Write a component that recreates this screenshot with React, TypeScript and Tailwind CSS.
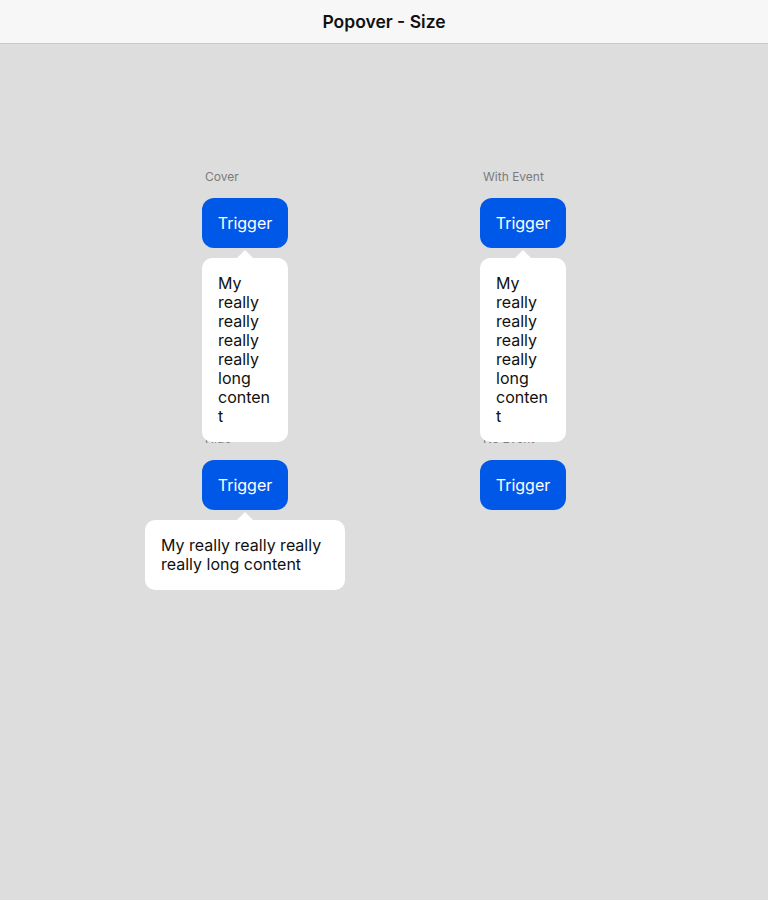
import React from 'react'

const font = { fontFamily: 'Inter, "Noto Sans", sans-serif' }

const Popover = ({ text, wide }: { text: string; wide?: boolean }) => (
  <div
    className={`absolute top-[60px] left-1/2 -translate-x-1/2 z-10 ${wide ? 'w-[200px]' : 'w-[86px]'}`}
  >
    <div className="absolute -top-[8px] left-1/2 -translate-x-1/2 w-0 h-0 border-l-[9px] border-r-[9px] border-b-[9px] border-l-transparent border-r-transparent border-b-white" />
    <div className="bg-white rounded-[10px] p-4 text-[16px] leading-[19px] text-[#111] break-words">
      {text}
    </div>
  </div>
)

const Demo = ({ label, popover, wide }: { label: string; popover?: boolean; wide?: boolean }) => (
  <div className="flex flex-col items-start w-[86px]">
    <p className="pl-[3px] text-[12px] leading-[16px] text-[#7b7b7b]">{label}</p>
    <div className="relative mt-[13px]">
      <button className="w-[86px] h-[50px] rounded-[12px] bg-[#0058e8] text-white text-[16px]">
        Trigger
      </button>
      {popover && <Popover text="My really really really really long content" wide={wide} />}
    </div>
  </div>
)

const App = () => {
  return (
    <div className="min-h-[900px] bg-[#dddddd]" style={font}>
      <header className="h-[44px] bg-[#f7f7f7] border-b border-[#c9c9c9] flex items-center justify-center pt-[1px]">
        <h1 className="text-[17.5px] font-semibold text-[#111]">Popover - Size</h1>
      </header>
      <div className="grid grid-cols-[278px_278px] justify-center pt-[125px] gap-y-[183px]">
        <div className="flex justify-center">
          <Demo label="Cover" popover />
        </div>
        <div className="flex justify-center">
          <Demo label="With Event" popover />
        </div>
        <div className="flex justify-center">
          <Demo label="Hide" popover wide />
        </div>
        <div className="flex justify-center">
          <Demo label="No Event" />
        </div>
      </div>
    </div>
  )
}

export default App
